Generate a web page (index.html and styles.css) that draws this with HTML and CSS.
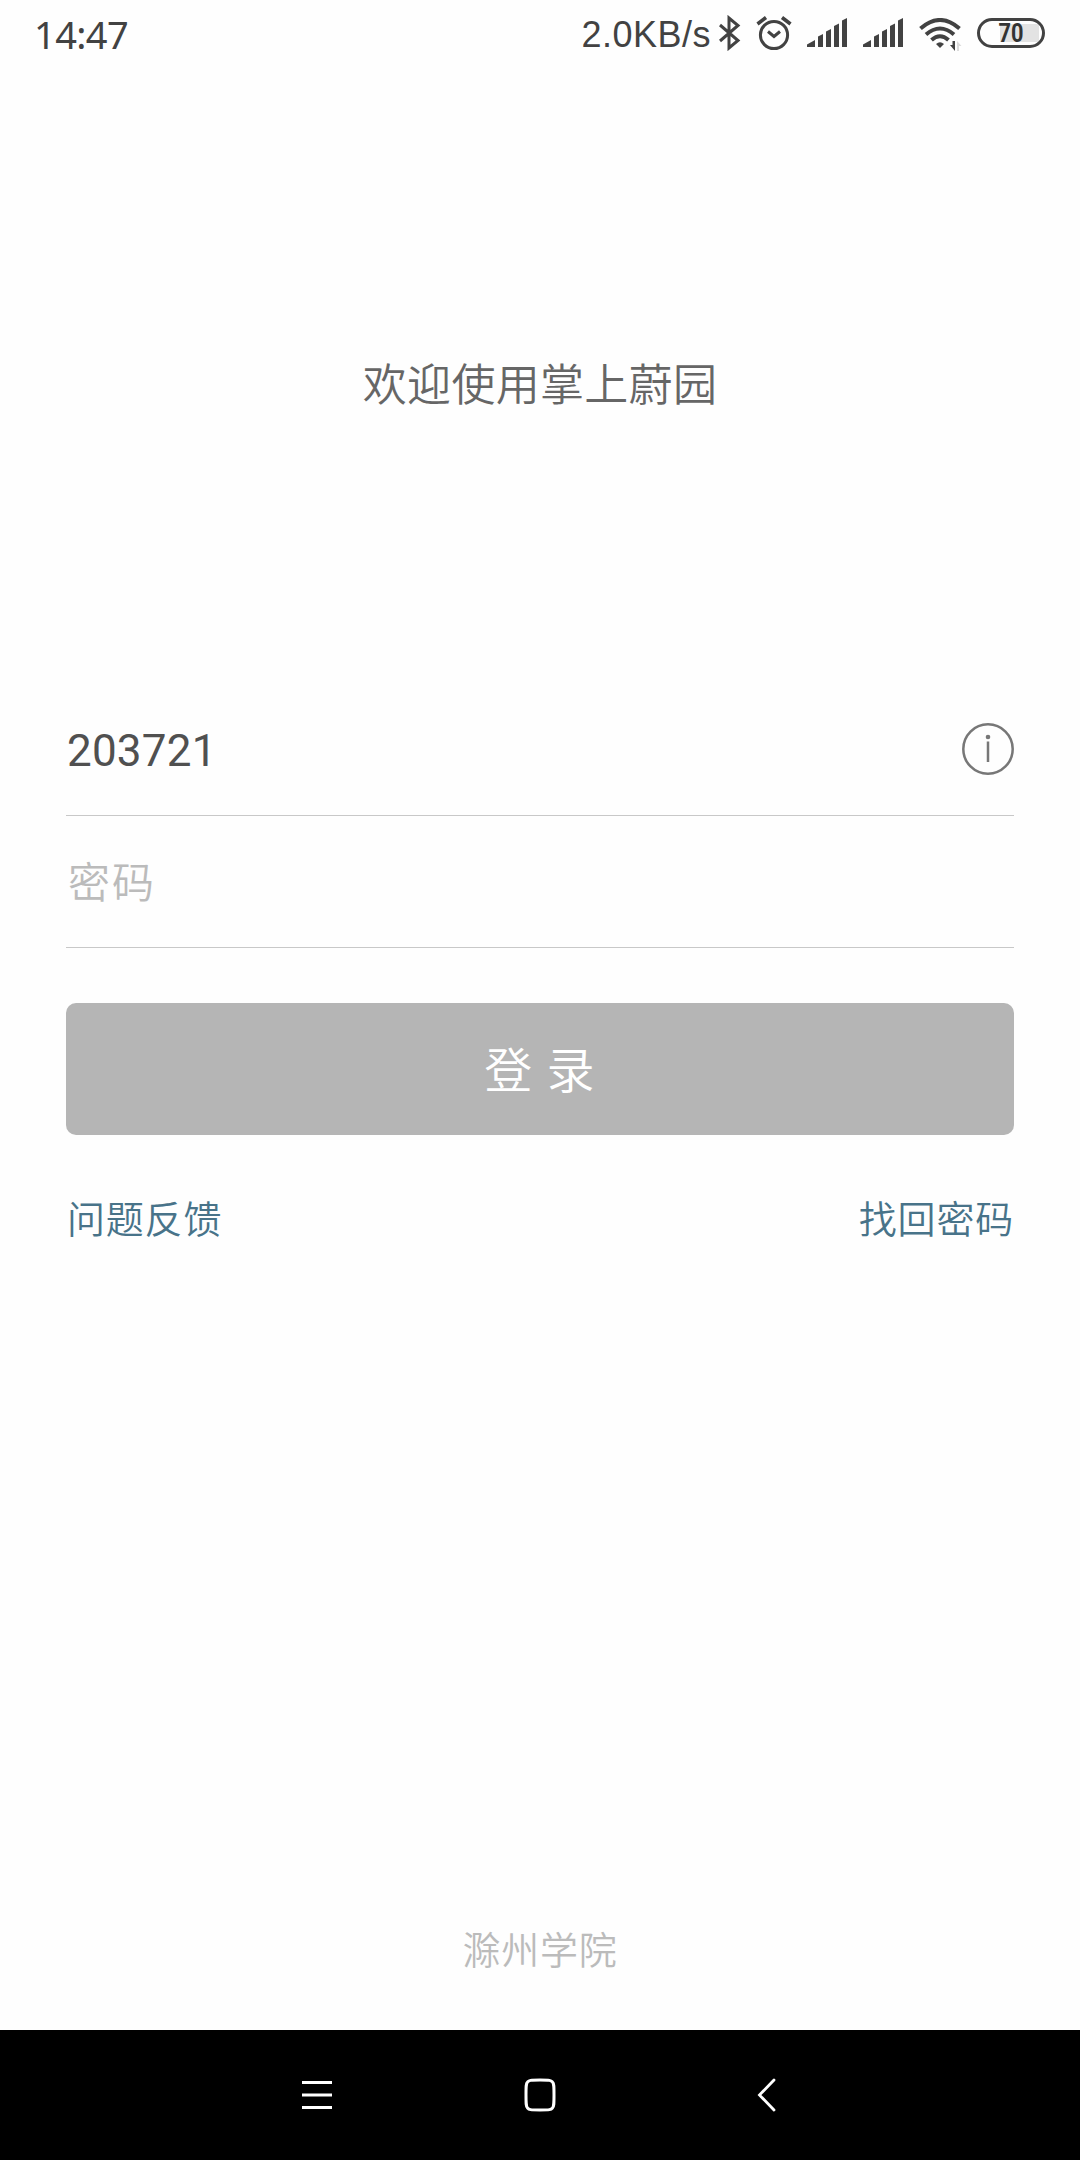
FILE: index.html
```html
<!DOCTYPE html>
<html lang="zh-CN">
<head>
    <meta charset="UTF-8">
    <meta name="viewport" content="width=device-width, initial-scale=1.0">
    <title>掌上蔚园</title>
    <link rel="stylesheet" href="styles.css">
</head>
<body>
    <div class="status-bar">
        <span class="time">14:47</span>
        <div class="status-icons">
            <span class="speed">2.0KB/s</span>
            <svg class="bluetooth" width="22" height="36" viewBox="0 0 22 36" fill="none" stroke="#424242" stroke-width="3">
                <path d="M1 10 19 25.5 10 33V3L19 10.5 1 26"/>
            </svg>
            <svg class="alarm" width="36" height="36" viewBox="0 0 36 36" fill="none" stroke="#424242" stroke-width="3">
                <circle cx="18" cy="20" r="13.6"/>
                <path d="M12 16.5 18 21.5 24 16.5" />
                <path d="M1.5 9 10 2.5M34.5 9 26 2.5" stroke-width="3.6"/>
            </svg>
            <svg class="signal" width="40" height="30" viewBox="0 0 40 30" fill="#424242">
                <path d="M0 26.5 8 22v7H0zM11 18.5 16 16v13h-5zM19 13.5 24 11v18h-5zM27 8 32 5.5V29h-5zM35 2.5 40 0v29h-5z"/>
            </svg>
            <svg class="signal" width="40" height="30" viewBox="0 0 40 30" fill="#424242">
                <path d="M0 26.5 8 22v7H0zM11 18.5 16 16v13h-5zM19 13.5 24 11v18h-5zM27 8 32 5.5V29h-5zM35 2.5 40 0v29h-5z"/>
            </svg>
            <svg class="wifi" width="43" height="34" viewBox="0 0 43 34" fill="none" stroke="#424242" stroke-width="4">
                <path d="M1.5 10.5Q21 -6.5 40.5 10.5M7 16.5Q21 4.5 35 16.5M12.5 22Q21 14.5 29.5 22"/>
                <path d="M17 26Q21 22.5 25 26L21 30z" fill="#424242" stroke="none"/>
                <path d="M31 27h2.5v-4H36v10z" fill="#424242" stroke="none"/>
                <path d="M38 23l4.5 5H40v5h-2z" fill="#dcdcdc" stroke="none"/>
            </svg>
            <div class="battery"><span>70</span></div>
        </div>
    </div>

    <div class="login">
        <h1>欢迎使用掌上蔚园</h1>

        <div class="input-group">
            <input type="text" value="203721">
            <svg class="info" width="52" height="52" viewBox="0 0 52 52" fill="none" stroke="#777" stroke-width="2.5">
                <circle cx="26" cy="26" r="24.7"/>
                <path d="M26 18.5v20.5"/>
                <circle cx="26" cy="14" r="2.3" fill="#777" stroke="none"/>
            </svg>
        </div>
        <div class="input-group">
            <input type="password" placeholder="密码">
        </div>

        <button>登 录</button>

        <div class="links">
            <a>问题反馈</a>
            <a>找回密码</a>
        </div>

        <div class="school">滁州学院</div>
    </div>

    <div class="nav-bar">
        <svg width="34" height="36" viewBox="0 0 34 36" fill="none" stroke="#fff" stroke-width="3">
            <path d="M2 5.5h30M2 18h30M2 30.5h30"/>
        </svg>
        <svg width="34" height="36" viewBox="0 0 34 36" fill="none" stroke="#fff" stroke-width="3">
            <path d="M17 3C27 3 28 3.3 29.5 5 31 6.5 31 9 31 18S31 29.5 29.5 31C28 32.7 27 33 17 33S6 32.7 4.500 31C3 29.5 3 27 3 18S3 6.5 4.5 5C6 3.3 7 3 17 3z"/>
        </svg>
        <svg width="34" height="36" viewBox="0 0 34 36" fill="none" stroke="#fff" stroke-width="2.8" stroke-linecap="round">
            <path d="M29 3 14.5 18 29 33"/>
        </svg>
    </div>
</body>
</html>
```

FILE: styles.css
```css
* {
    margin: 0;
    padding: 0;
    box-sizing: border-box;
}

body {
    width: 1080px;
    height: 2160px;
    display: flex;
    flex-direction: column;
    background: #fefefe;
    font-family: Roboto, "Noto Sans CJK SC", sans-serif;
    font-weight: 350;
    overflow: hidden;
}

.status-bar {
    height: 68px;
    padding: 0 35px 0 34px;
    display: flex;
    justify-content: space-between;
    color: #424242;
}

.time {
    font: 38px/68px "Noto Sans", sans-serif;
    letter-spacing: -0.6px;
}

.status-icons {
    display: flex;
    align-items: flex-start;
}

.speed {
    font: 36px/70px "Liberation Sans", sans-serif;
    letter-spacing: 0.5px;
}

.bluetooth {
    margin: 15px 0 0 8px;
}

.alarm {
    margin: 15px 0 0 15px;
}

.signal {
    margin: 18px 0 0 16px;
}

.alarm + .signal {
    margin-left: 15px;
}

.wifi {
    margin: 18px 0 0 16px;
}

.battery {
    width: 68px;
    height: 30px;
    margin: 18px 0 0 15px;
    border: 3px solid #424242;
    border-radius: 15px;
    background: linear-gradient(#e3e3e3, #e3e3e3) 20px 3px / 39px 18px no-repeat;
    font: bold 25px/26px Roboto, sans-serif;
    text-align: center;
    color: #333;
}

.battery span {
    display: block;
    transform: scaleX(0.87);
}

.login {
    flex: 1;
    padding: 0 66px;
    display: flex;
    flex-direction: column;
}

h1 {
    margin-top: 286px;
    height: 64px;
    line-height: 64px;
    font-size: 44px;
    font-weight: 350;
    letter-spacing: 0.3px;
    text-align: center;
    color: #666;
}

.input-group {
    height: 132px;
    display: flex;
    align-items: center;
    border-bottom: 1px solid #c8c8c8;
}

h1 + .input-group {
    margin-top: 266px;
}

.info {
    margin-bottom: 2px;
}

input {
    flex: 1;
    height: 100px;
    padding-top: 2px;
    padding-left: 1px;
    border: none;
    outline: none;
    background: none;
    font-family: inherit;
    font-size: 44px;
    font-weight: 400;
    letter-spacing: 0.2px;
    color: #505050;
}

input[type="password"] {
    padding-left: 2px;
}

input::placeholder {
    font-size: 42px;
    font-weight: 350;
    letter-spacing: 2px;
    color: #bbb;
}

button {
    height: 132px;
    margin-top: 55px;
    padding-bottom: 4px;
    border: none;
    border-radius: 10px;
    background: #b5b5b5;
    font-family: inherit;
    font-size: 48px;
    font-weight: 350;
    letter-spacing: 1.2px;
    color: #fff;
}

.links {
    display: flex;
    justify-content: space-between;
    margin-top: 57px;
    padding: 0 0 0 1px;
    line-height: 56px;
    font-size: 38px;
    letter-spacing: 0.8px;
    color: #487389;
}

.school {
    margin-top: auto;
    margin-bottom: 51px;
    line-height: 56px;
    font-size: 38px;
    letter-spacing: 0.8px;
    text-align: center;
    color: #bbb;
}

.nav-bar {
    height: 130px;
    padding: 47px 301px 0 300px;
    display: flex;
    justify-content: space-between;
    background: #000;
}
```
